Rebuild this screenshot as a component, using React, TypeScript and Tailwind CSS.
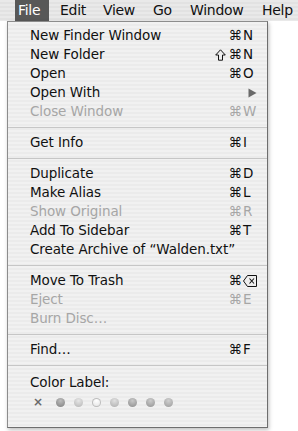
type Item =
  | { kind: "sep" }
  | {
      kind: "item";
      label: string;
      shift?: boolean;
      cmd?: boolean;
      keyName?: string;
      disabled?: boolean;
      submenu?: boolean;
      del?: boolean;
    };

const items: Item[] = [
  { kind: "item", label: "New Finder Window", cmd: true, keyName: "N" },
  { kind: "item", label: "New Folder", shift: true, cmd: true, keyName: "N" },
  { kind: "item", label: "Open", cmd: true, keyName: "O" },
  { kind: "item", label: "Open With", submenu: true },
  { kind: "item", label: "Close Window", cmd: true, keyName: "W", disabled: true },
  { kind: "sep" },
  { kind: "item", label: "Get Info", cmd: true, keyName: "I" },
  { kind: "sep" },
  { kind: "item", label: "Duplicate", cmd: true, keyName: "D" },
  { kind: "item", label: "Make Alias", cmd: true, keyName: "L" },
  { kind: "item", label: "Show Original", cmd: true, keyName: "R", disabled: true },
  { kind: "item", label: "Add To Sidebar", cmd: true, keyName: "T" },
  { kind: "item", label: "Create Archive of “Walden.txt”" },
  { kind: "sep" },
  { kind: "item", label: "Move To Trash", cmd: true, del: true },
  { kind: "item", label: "Eject", cmd: true, keyName: "E", disabled: true },
  { kind: "item", label: "Burn Disc…", disabled: true },
  { kind: "sep" },
  { kind: "item", label: "Find…", cmd: true, keyName: "F" },
  { kind: "sep" },
];

const labelColors = [
  "bg-[radial-gradient(circle_at_50%_30%,#bdbdbd,#7e7e7e)]",
  "bg-[radial-gradient(circle_at_50%_30%,#e6e6e6,#b4b4b4)]",
  "bg-[radial-gradient(circle_at_50%_30%,#ffffff,#dedede)] ring-1 ring-[#bdbdbd] ring-inset",
  "bg-[radial-gradient(circle_at_50%_30%,#e0e0e0,#acacac)]",
  "bg-[radial-gradient(circle_at_50%_30%,#c8c8c8,#8c8c8c)]",
  "bg-[radial-gradient(circle_at_50%_30%,#cccccc,#929292)]",
  "bg-[radial-gradient(circle_at_50%_30%,#d0d0d0,#9a9a9a)]",
];

function DeleteKey({ color }: { color: string }) {
  return (
    <svg width="14" height="12" viewBox="0 0 14 12">
      <path d="M4.5 0.5 H13.5 V11.5 H4.5 L0.5 6 Z" fill="none" stroke={color} strokeWidth="1" />
      <path d="M6.5 3.5 L11 8.5 M11 3.5 L6.5 8.5" stroke={color} strokeWidth="1.1" />
    </svg>
  );
}

function ShiftKey({ color }: { color: string }) {
  return (
    <svg width="11" height="12" viewBox="0 0 11 12" className="mr-[3px]">
      <path d="M5.5 0.8 L10.3 6 H7.5 V11.2 H3.5 V6 H0.7 Z" fill="none" stroke={color} strokeWidth="1" strokeLinejoin="round" />
    </svg>
  );
}

function MenuRow({ item }: { item: Extract<Item, { kind: "item" }> }) {
  const color = item.disabled ? "text-[#a6a6a6]" : "text-[#111]";
  const stroke = item.disabled ? "#a6a6a6" : "#111";
  return (
    <div className={`flex h-[19px] items-center pl-[22px] pr-[9px] ${color}`}>
      <span className="flex-1 whitespace-nowrap">{item.label}</span>
      {item.submenu ? (
        <svg width="9" height="10" viewBox="0 0 9 10" className="mr-[1px]">
          <path d="M0.5 0.5 L8.5 5 L0.5 9.5 Z" fill="#6a6a6a" />
        </svg>
      ) : (
        <>
          {item.shift && <ShiftKey color={stroke} />}
          <span className="whitespace-nowrap">{item.cmd ? "⌘" : ""}</span>
          <span className="flex w-[16px] items-center pl-[1px]">
            {item.del ? <DeleteKey color={stroke} /> : item.keyName ?? ""}
          </span>
        </>
      )}
    </div>
  );
}

export default function App() {
  return (
    <div className="relative h-[431px] w-[298px] overflow-hidden bg-white font-['DejaVu_Sans',sans-serif] text-[13.5px] tracking-[-0.1px]">
      {/* menu bar */}
      <div className="flex h-[21px] items-stretch bg-[repeating-linear-gradient(to_bottom,#e9e9e9_0px,#e9e9e9_2px,#e2e2e2_2px,#e2e2e2_4px)] pl-[15px] text-[14px] tracking-[-0.3px] text-[#111]">
        <div className="flex w-[34px] items-center bg-[#585858] pl-[3px] text-white">File</div>
        <div className="flex w-[54px] items-center pl-[11px]">Edit</div>
        <div className="flex w-[50px] items-center">View</div>
        <div className="flex w-[37px] items-center">Go</div>
        <div className="flex w-[72px] items-center">Window</div>
        <div className="flex items-center">Help</div>
      </div>

      {/* dropdown */}
      <div className="absolute left-[7px] top-[21px] box-border h-[407px] w-[261px] border border-[#8c8c8c] border-r-[#6e6e6e] border-b-[#6e6e6e] bg-[repeating-linear-gradient(to_bottom,#f1f1f1_0px,#f1f1f1_2px,#ebebeb_2px,#ebebeb_4px)] pt-[4px] shadow-[1px_2px_4px_rgba(0,0,0,0.25)]">
        {items.map((item, i) =>
          item.kind === "sep" ? (
            <div key={i} className="flex h-[12px] items-center">
              <div className="h-px w-full bg-[#c6c6c6]" />
            </div>
          ) : (
            <MenuRow key={i} item={item} />
          ),
        )}
        <div className="flex h-[23px] items-center pl-[22px] text-[#111]">Color Label:</div>
        <div className="flex h-[16px] items-center pl-[25px]">
          <span className="w-[8px] text-center text-[12px] font-bold leading-none text-[#6a6a6a]">×</span>
          <div className="ml-[15px] flex gap-[9px]">
            {labelColors.map((c, i) => (
              <span key={i} className={`block h-[9px] w-[9px] rounded-full ${c}`} />
            ))}
          </div>
        </div>
      </div>
    </div>
  );
}
